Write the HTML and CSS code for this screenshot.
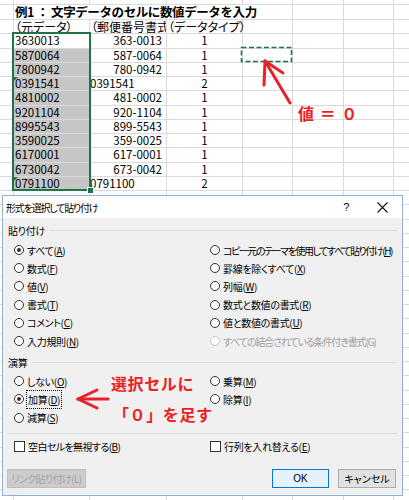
FILE: index.html
```html
<!DOCTYPE html>
<html lang="ja">
<head>
<meta charset="utf-8">
<link rel="stylesheet" href="styles.css">
</head>
<body>
<div class="sheet">
  <div></div><div></div><div></div><div></div><div></div><div></div><div></div><div></div>
  <div></div><div class="title">例1 ： 文字データのセルに数値データを入力</div><div></div><div></div><div></div>
  <div></div><div class="hd">（元データ）</div><div class="hd clip">（郵便番号書式）</div><div class="hd">（データタイプ）</div><div></div><div></div><div></div><div></div>
  <div></div><div class="a">3630013</div><div class="b">363-0013</div><div class="n">1</div><div></div><div></div><div></div><div></div>
  <div></div><div class="a g">5870064</div><div class="b">587-0064</div><div class="n">1</div><div></div><div></div><div></div><div></div>
  <div></div><div class="a g">7800942</div><div class="b">780-0942</div><div class="n">1</div><div></div><div></div><div></div><div></div>
  <div></div><div class="a g err">0391541</div><div class="b l">0391541</div><div class="n">2</div><div></div><div></div><div></div><div></div>
  <div></div><div class="a g">4810002</div><div class="b">481-0002</div><div class="n">1</div><div></div><div></div><div></div><div></div>
  <div></div><div class="a g">9201104</div><div class="b">920-1104</div><div class="n">1</div><div></div><div></div><div></div><div></div>
  <div></div><div class="a g">8995543</div><div class="b">899-5543</div><div class="n">1</div><div></div><div></div><div></div><div></div>
  <div></div><div class="a g">3590025</div><div class="b">359-0025</div><div class="n">1</div><div></div><div></div><div></div><div></div>
  <div></div><div class="a g">6170001</div><div class="b">617-0001</div><div class="n">1</div><div></div><div></div><div></div><div></div>
  <div></div><div class="a g">6730042</div><div class="b">673-0042</div><div class="n">1</div><div></div><div></div><div></div><div></div>
  <div></div><div class="a g err">0791100</div><div class="b l">0791100</div><div class="n">2</div><div></div><div></div><div></div><div></div>
  <div></div><div></div><div></div><div></div><div></div><div></div><div></div><div></div>
  <div></div><div></div><div></div><div></div><div></div><div></div><div></div><div></div>
  <div></div><div></div><div></div><div></div><div></div><div></div><div></div><div></div>
  <div></div><div></div><div></div><div></div><div></div><div></div><div></div><div></div>
  <div></div><div></div><div></div><div></div><div></div><div></div><div></div><div></div>
  <div></div><div></div><div></div><div></div><div></div><div></div><div></div><div></div>
  <div></div><div></div><div></div><div></div><div></div><div></div><div></div><div></div>
  <div></div><div></div><div></div><div></div><div></div><div></div><div></div><div></div>
  <div></div><div></div><div></div><div></div><div></div><div></div><div></div><div></div>
  <div></div><div></div><div></div><div></div><div></div><div></div><div></div><div></div>
  <div></div><div></div><div></div><div></div><div></div><div></div><div></div><div></div>
  <div></div><div></div><div></div><div></div><div></div><div></div><div></div><div></div>
  <div></div><div></div><div></div><div></div><div></div><div></div><div></div><div></div>
  <div></div><div></div><div></div><div></div><div></div><div></div><div></div><div></div>
  <div></div><div></div><div></div><div></div><div></div><div></div><div></div><div></div>
  <div></div><div></div><div></div><div></div><div></div><div></div><div></div><div></div>
  <div></div><div></div><div></div><div></div><div></div><div></div><div></div><div></div>
  <div></div><div></div><div></div><div></div><div></div><div></div><div></div><div></div>
  <div></div><div></div><div></div><div></div><div></div><div></div><div></div><div></div>
  <div></div><div></div><div></div><div></div><div></div><div></div><div></div><div></div>
  <div></div><div></div><div></div><div></div><div></div><div></div><div></div><div></div>
  <div></div><div></div><div></div><div></div><div></div><div></div><div></div><div></div>
</div>

<div class="selection"><span class="handle"></span></div>
<svg class="ants" width="54" height="18" viewBox="0 0 54 18"><rect x="1.5" y="1.5" width="50" height="14" fill="none" stroke="#217346" stroke-width="1.6" stroke-dasharray="5 2.5"/></svg>
<svg class="arrow1" width="60" height="70" viewBox="250 50 60 70"><g stroke="#e9202a" stroke-width="3" stroke-linecap="round" fill="none"><line x1="290" y1="103" x2="265" y2="61"/><line x1="265" y1="61" x2="264" y2="85"/><line x1="265" y1="61" x2="283" y2="73"/></g></svg>
<div class="note zero">値 ＝ ０</div>

<div class="dialog">
  <div class="titlebar">
    <span class="ttl">形式を選択して貼り付け</span>
    <span class="help">?</span>
    <svg class="close" width="11" height="11" viewBox="0 0 11 11"><path d="M0.5 0.5 L10.5 10.5 M10.5 0.5 L0.5 10.5" stroke="#111" stroke-width="1.1"/></svg>
  </div>
  <div class="dbody">
    <div class="grp"><span>貼り付け</span><span class="rule"></span></div>
    <div class="opts">
      <label class="opt"><span class="rb on"></span><span>すべて(<u>A</u>)</span></label>
      <label class="opt"><span class="rb"></span><span class="tight">コピー元のテーマを使用してすべて貼り付け(<u>H</u>)</span></label>
      <label class="opt"><span class="rb"></span><span>数式(<u>F</u>)</span></label>
      <label class="opt"><span class="rb"></span><span>罫線を除くすべて(<u>X</u>)</span></label>
      <label class="opt"><span class="rb"></span><span>値(<u>V</u>)</span></label>
      <label class="opt"><span class="rb"></span><span>列幅(<u>W</u>)</span></label>
      <label class="opt"><span class="rb"></span><span>書式(<u>T</u>)</span></label>
      <label class="opt"><span class="rb"></span><span>数式と数値の書式(<u>R</u>)</span></label>
      <label class="opt"><span class="rb"></span><span>コメント(<u>C</u>)</span></label>
      <label class="opt"><span class="rb"></span><span>値と数値の書式(<u>U</u>)</span></label>
      <label class="opt"><span class="rb"></span><span>入力規則(<u>N</u>)</span></label>
      <label class="opt off"><span class="rb"></span><span class="semi">すべての結合されている条件付き書式(G)</span></label>
    </div>
    <div class="grp g2"><span>演算</span><span class="rule"></span></div>
    <div class="opts o2">
      <label class="opt"><span class="rb"></span><span>しない(<u>O</u>)</span></label>
      <label class="opt"><span class="rb"></span><span>乗算(<u>M</u>)</span></label>
      <label class="opt"><span class="rb on"></span><span class="focus">加算(<u>D</u>)</span></label>
      <label class="opt"><span class="rb"></span><span>除算(<u>I</u>)</span></label>
      <label class="opt"><span class="rb"></span><span>減算(<u>S</u>)</span></label>
    </div>
    <div class="sep"></div>
    <div class="opts checks">
      <label class="opt"><span class="cb"></span><span class="semi2">空白セルを無視する(<u>B</u>)</span></label>
      <label class="opt"><span class="cb"></span><span>行列を入れ替える(<u>E</u>)</span></label>
    </div>
    <div class="buttons">
      <span class="btn link">リンク貼り付け(L)</span>
      <span class="btn ok">OK</span>
      <span class="btn cancel">キャンセル</span>
    </div>
  </div>
</div>

<div class="note n1">選択セルに</div>
<div class="note n2">「０」を足す</div>
<svg class="arrow2" width="40" height="30" viewBox="72 385 40 30"><g stroke="#e9202a" stroke-width="3" stroke-linecap="round" fill="none"><line x1="78" y1="399" x2="108" y2="399"/><line x1="78" y1="399" x2="97" y2="390"/><line x1="78" y1="399" x2="97" y2="408"/></g></svg>
</body>
</html>
```

FILE: styles.css
```css
html, body {
  margin: 0;
  width: 409px;
  height: 500px;
  overflow: hidden;
  background: #fff;
}
body {
  position: relative;
  font-family: "Noto Sans CJK JP", sans-serif;
  color: #000;
}

/* spreadsheet */
.sheet {
  display: grid;
  grid-template-columns: 14px 76px 77px 76px 50px 51px 50px 50px;
  grid-template-rows: 5px 15px 14px 15px 14px 14px 14px 15px 14px 14px 14px 15px 14px 14px;
  grid-auto-rows: 14.25px;
  width: 409px;
  height: 500px;
  overflow: hidden;
}
.sheet > div {
  box-sizing: border-box;
  border-right: 1px solid #dadada;
  border-bottom: 1px solid #dadada;
  display: flex;
  align-items: center;
  white-space: nowrap;
  font-size: 11.5px;
  line-height: 1;
  padding: 0 1px;
  min-width: 0;
  position: relative;
}
.sheet > .title {
  grid-column: span 4;
  font-weight: bold;
  font-size: 12.5px;
  letter-spacing: -0.4px;
}
.sheet > .hd {
  font-size: 12px;
  font-feature-settings: "palt";
}
.sheet > .clip { overflow: hidden; }
.sheet > .g { background: #c6c6c6; }
.sheet > .b { justify-content: flex-end; padding-right: 4px; }
.sheet > .b.l { justify-content: flex-start; padding-left: 0; }
.sheet > .n { justify-content: center; }
.sheet > .err::before {
  content: "";
  position: absolute;
  left: 0;
  top: 0;
  border-top: 4px solid #217346;
  border-right: 4px solid transparent;
}

.selection {
  position: absolute;
  left: 12px;
  top: 32px;
  width: 79px;
  height: 159px;
  box-sizing: border-box;
  border: 2px solid #217346;
}
.handle {
  position: absolute;
  right: -5px;
  bottom: -5px;
  width: 5px;
  height: 5px;
  background: #217346;
  border: 1px solid #fff;
}
.ants {
  position: absolute;
  left: 240px;
  top: 46px;
}
.arrow1 {
  position: absolute;
  left: 250px;
  top: 50px;
}
.arrow2 {
  position: absolute;
  left: 72px;
  top: 385px;
  z-index: 3;
}

.note {
  position: absolute;
  color: #ee1d23;
  font-weight: bold;
  font-size: 16px;
  line-height: 20px;
  white-space: nowrap;
  z-index: 3;
}
.zero { left: 298px; top: 103px; letter-spacing: 1px; }
.n1 { left: 111px; top: 373px; letter-spacing: 0.6px; }
.n2 { left: 113px; top: 404px; letter-spacing: 0.6px; }

/* dialog */
.dialog {
  position: absolute;
  left: 2px;
  top: 195px;
  width: 401px;
  height: 301px;
  box-sizing: border-box;
  border: 1px solid #92b0d5;
  background: #f0f0f0;
  font-size: 10px;
  letter-spacing: -0.3px;
  font-feature-settings: "palt";
  z-index: 2;
}
.titlebar {
  height: 22px;
  background: #fff;
  display: flex;
  align-items: center;
  padding-left: 3px;
}
.ttl { letter-spacing: -1.2px; }
.help {
  margin-left: auto;
  font-size: 11px;
  font-family: "Liberation Sans", sans-serif;
}
.close {
  margin: 0 14px 0 28px;
}
.dbody {
  padding-top: 5px;
}
.grp {
  display: flex;
  align-items: center;
  gap: 5px;
  height: 14px;
  padding: 0 5px;
}
.rule {
  flex: 1;
  height: 1px;
  background: #dcdcdc;
}
.g2 { margin-top: 5px; }
.opts {
  display: grid;
  grid-template-columns: 196px 1fr;
  grid-auto-rows: 18.2px;
  padding-left: 11px;
  margin-top: 4px;
}
.o2 { margin-top: 3px; }
.opt {
  display: flex;
  align-items: center;
  white-space: nowrap;
}
.opt.off { color: #a0a0a0; }
.tight { letter-spacing: -1.45px; }
.semi { letter-spacing: -1.15px; }
.semi2 { letter-spacing: -0.6px; }
.rb {
  flex: none;
  width: 10px;
  height: 10px;
  margin-right: 3px;
  box-sizing: border-box;
  border: 1px solid #333;
  border-radius: 50%;
  background: #fff;
}
.off .rb { border-color: #c4c4c4; }
.rb.on::after {
  content: "";
  display: block;
  width: 4px;
  height: 4px;
  margin: 2px;
  border-radius: 50%;
  background: #333;
}
.focus {
  outline: 1px dotted #000;
  outline-offset: 0;
  padding: 1px 1px;
}
.sep {
  height: 1px;
  background: #dcdcdc;
  margin: 6px 5px 0;
}
.checks { margin-top: 4px; }
.cb {
  flex: none;
  width: 11px;
  height: 11px;
  margin-right: 3px;
  box-sizing: border-box;
  border: 1px solid #333;
  background: #fff;
}
.buttons {
  display: flex;
  gap: 9px;
  padding: 0 6px 0 4px;
  margin-top: 13px;
}
.btn {
  height: 19px;
  box-sizing: border-box;
  border: 1px solid #adadad;
  background: #e1e1e1;
  display: flex;
  align-items: center;
  justify-content: center;
  letter-spacing: 0;
}
.btn.link {
  width: 79px;
  margin-right: auto;
  color: #a3a3a3;
  background: #cccccc;
  border-color: #bfbfbf;
  letter-spacing: -0.6px;
}
.btn.ok {
  width: 57px;
  background: #e5f1fb;
  border-color: #0078d7;
  font-family: "Liberation Sans", sans-serif;
}
.btn.cancel { width: 58px; }
```
